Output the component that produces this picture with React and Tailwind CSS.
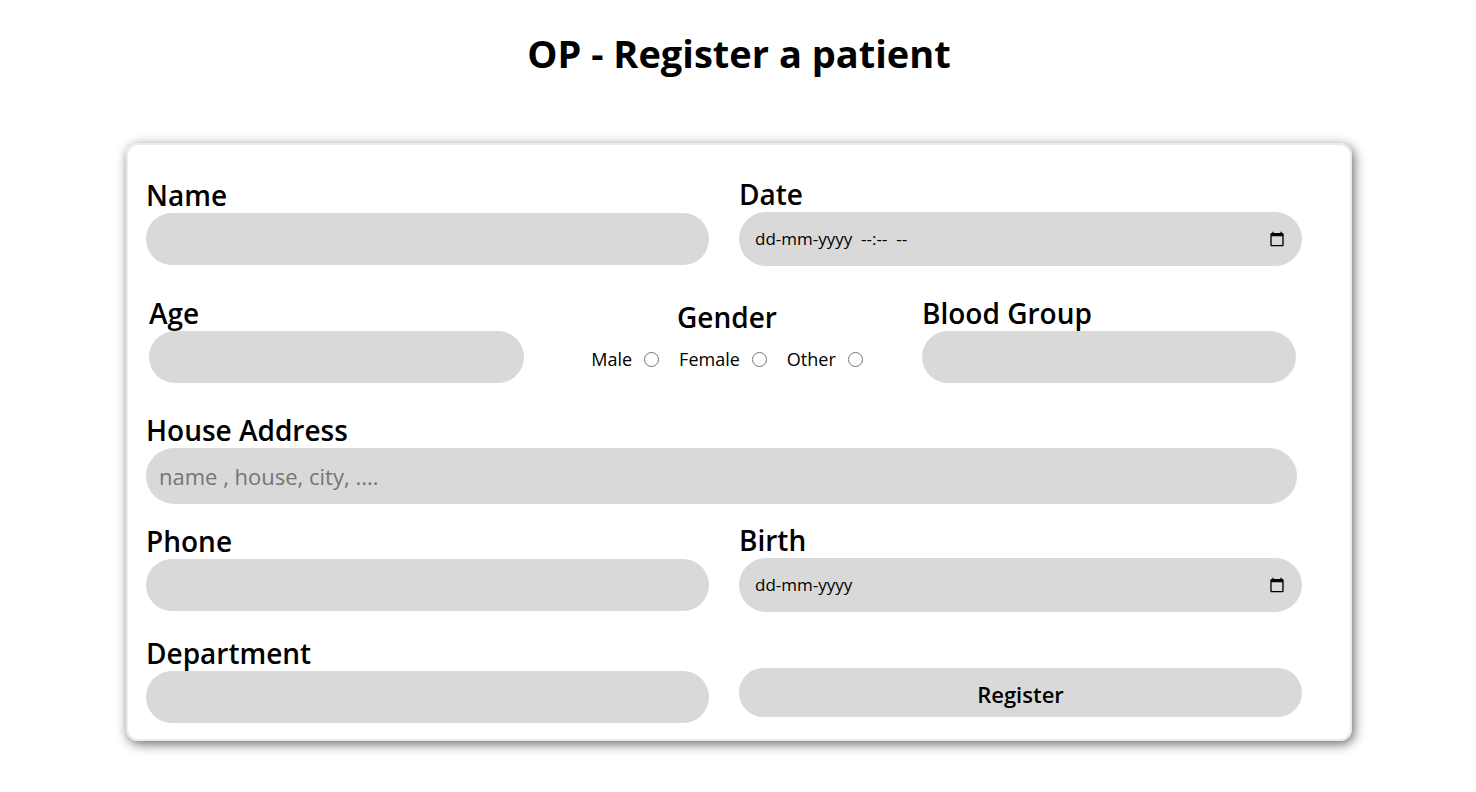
import React, { useRef } from "react";

const labelClass = "block text-[28px] leading-9 font-semibold";
const fieldClass =
  "block w-full rounded-full bg-[#d9d9d9] px-[13px] text-[22px] text-black placeholder:text-[#757575] outline-none";

function Field({ id, label, type = "text", placeholder, height = "h-[52px]" }) {
  return (
    <div>
      <label htmlFor={id} className={labelClass}>{label}</label>
      <input id={id} name={id} type={type} placeholder={placeholder} className={`${fieldClass} ${height}`} />
    </div>
  );
}

function CalendarIcon() {
  return (
    <svg viewBox="0 0 24 24" className="size-4" fill="black" aria-hidden="true">
      <path d="M20 3h-1V1h-2v2H7V1H5v2H4c-1.1 0-2 .9-2 2v16c0 1.1.9 2 2 2h16c1.1 0 2-.9 2-2V5c0-1.1-.9-2-2-2zm0 18H4V8h16v13z" />
    </svg>
  );
}

function DateField({ id, label, placeholder }) {
  const input = useRef(null);
  return (
    <div>
      <label htmlFor={id} className={labelClass}>{label}</label>
      <div className="flex h-[54px] items-center rounded-full bg-[#d9d9d9] pr-[17px] pl-4">
        <input
          ref={input}
          id={id}
          name={id}
          type="text"
          placeholder={placeholder}
          className="min-w-0 flex-1 bg-transparent text-[17px] text-black outline-none placeholder:text-black"
        />
        <button type="button" aria-label={`Choose ${label}`} onClick={() => input.current.focus()}>
          <CalendarIcon />
        </button>
      </div>
    </div>
  );
}

function GenderOption({ value }) {
  return (
    <label className="flex items-center gap-3 text-lg leading-6">
      {value}
      <input
        type="radio"
        name="gender"
        value={value}
        className="size-[15px] appearance-none rounded-full border border-[#767676] bg-white checked:border-4 checked:border-[#0075ff]"
      />
    </label>
  );
}

export default function App() {
  return (
    <main className="bg-white pt-6 pr-[124px] pb-12 pl-[126px] font-['Open_Sans',sans-serif] text-black">
      <h1 className="text-center text-[38px] leading-[58px] font-bold">OP - Register a patient</h1>
      <form
        onSubmit={(e) => e.preventDefault()}
        className="mt-[61px] rounded-xl border-2 border-[#ebebeb] pt-[31px] pr-12 pb-4 pl-[18px] shadow-[2px_3px_12px_rgba(0,0,0,0.6)]"
      >
        <div className="grid grid-cols-2 items-center gap-x-[30px]">
          <Field id="name" label="Name" />
          <DateField id="date" label="Date" placeholder="dd-mm-yyyy  --:--  --" />
        </div>

        <div className="mt-[29px] grid grid-cols-[375fr_398fr_374fr] pr-1.5 pl-[3px]">
          <Field id="age" label="Age" />
          <fieldset className="pt-1 pl-2">
            <legend className="w-full pt-1 text-center text-[28px] leading-9 font-semibold">Gender</legend>
            <div className="mt-2 flex justify-center gap-5">
              <GenderOption value="Male" />
              <GenderOption value="Female" />
              <GenderOption value="Other" />
            </div>
          </fieldset>
          <Field id="blood-group" label="Blood Group" />
        </div>

        <div className="mt-[29px] pr-[5px]">
          <Field id="address" label="House Address" placeholder="name , house, city, ...." height="h-14" />
        </div>

        <div className="mt-[18px] grid grid-cols-2 items-center gap-x-[30px]">
          <Field id="phone" label="Phone" type="tel" />
          <DateField id="birth" label="Birth" placeholder="dd-mm-yyyy" />
        </div>

        <div className="mt-[23px] grid grid-cols-2 items-end gap-x-[30px]">
          <Field id="department" label="Department" />
          <button type="submit" className="mb-1.5 h-[49px] rounded-full bg-[#d9d9d9] pt-1 text-[22px] font-semibold">
            Register
          </button>
        </div>
      </form>
    </main>
  );
}
